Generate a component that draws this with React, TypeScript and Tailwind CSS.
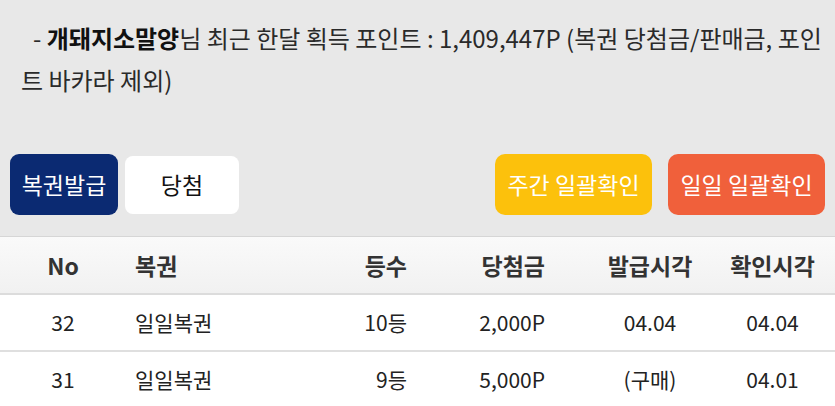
const rows = [
  { no: "32", name: "일일복권", rank: "10등", prize: "2,000P", issued: "04.04", checked: "04.04" },
  { no: "31", name: "일일복권", rank: "9등", prize: "5,000P", issued: "(구매)", checked: "04.01" },
];

const gridCols = "grid grid-cols-[126px_200px_91px_173px_120px_125px] items-center";

export default function App() {
  return (
    <div
      className="w-[835px] h-[406px] overflow-hidden bg-[#e8e8e8] text-[#222]"
      style={{ fontFamily: '"Noto Sans CJK KR", "Noto Sans", sans-serif' }}
    >
      <p className="pt-[17px] pl-[21px] pr-[10px] indent-[12px] text-[24px] leading-[42px] text-[#2a2a2a]">
        - <b className="font-bold text-[#111]">개돼지소말양</b>님 최근 한달 획득 포인트 : 1,409,447P (복권 당첨금/판매금, 포인트 바카라 제외)
      </p>

      <div className="flex items-center px-[10px] mt-[53px]">
        <button className="h-[61px] w-[108px] rounded-[9px] bg-[#0b2a72] text-white text-[23px]">
          복권발급
        </button>
        <button className="ml-[7px] h-[58px] w-[114px] rounded-[8px] bg-white text-[#111] text-[23px]">
          당첨
        </button>
        <div className="flex-1" />
        <button className="h-[61px] w-[157px] rounded-[10px] bg-[#fcc10c] text-white text-[23px]">
          주간 일괄확인
        </button>
        <button className="ml-[16px] h-[61px] w-[157px] rounded-[10px] bg-[#f0603b] text-white text-[23px]">
          일일 일괄확인
        </button>
      </div>

      <div className="mt-[21px] border-t border-[#d6d6d6]">
        <div
          className={`${gridCols} h-[58px] bg-gradient-to-b from-[#fafafa] to-[#f1f1f1] border-b-2 border-[#dcdcdc] text-[23px] font-semibold text-[#333]`}
        >
          <div className="text-center">No</div>
          <div className="pl-[9px]">복권</div>
          <div className="text-right pr-[10px]">등수</div>
          <div className="text-right pr-[45px]">당첨금</div>
          <div className="text-center">발급시각</div>
          <div className="text-center">확인시각</div>
        </div>
        {rows.map((r) => (
          <div
            key={r.no}
            className={`${gridCols} h-[57px] bg-white border-b-2 border-[#dfdfdf] text-[21px] text-[#222]`}
          >
            <div className="text-center">{r.no}</div>
            <div className="pl-[9px]">{r.name}</div>
            <div className="text-right pr-[10px]">{r.rank}</div>
            <div className="text-right pr-[45px]">{r.prize}</div>
            <div className="text-center">{r.issued}</div>
            <div className="text-center">{r.checked}</div>
          </div>
        ))}
      </div>
    </div>
  );
}
